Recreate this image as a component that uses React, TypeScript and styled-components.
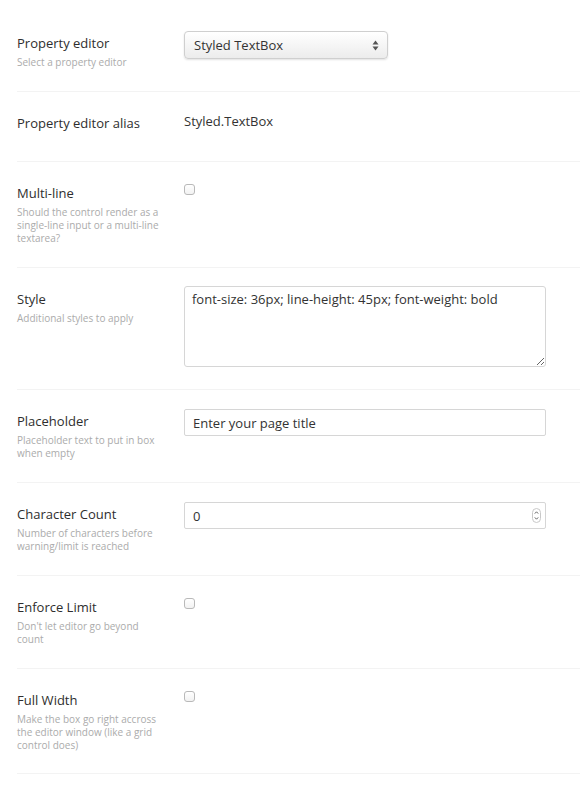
import React from 'react';
import styled, { createGlobalStyle } from 'styled-components';

const GlobalStyle = createGlobalStyle`
  html, body {
    margin: 0;
    padding: 0;
    background: #fff;
  }
  body {
    font-family: 'Open Sans', 'Liberation Sans', sans-serif;
    color: #333;
  }
`;

const Page = styled.div`
  padding: 12px 0 0 17px;
  width: 563px;
`;

const Row = styled.div`
  display: grid;
  grid-template-columns: 167px 1fr;
  padding: 19px 0 22px;
  border-bottom: 1px solid #f3f3f3;
  min-height: 28px;

  &:last-child {
    padding-bottom: 21px;
  }
`;

const LabelCol = styled.div`
  padding-top: 3px;
`;

const Label = styled.div`
  font-size: 13px;
  line-height: 18px;
  color: #2e2e2e;
`;

const Description = styled.div`
  margin-top: 4px;
  font-size: 10px;
  line-height: 13px;
  color: #ababab;
  max-width: 150px;
`;

const Controls = styled.div`
  display: flex;
  align-items: flex-start;
`;

const SelectBox = styled.div`
  position: relative;
  box-sizing: border-box;
  width: 204px;
  height: 28px;
  padding: 0 24px 0 9px;
  border: 1px solid #cfcfcf;
  border-radius: 4px;
  background: linear-gradient(#ffffff, #ececec);
  box-shadow: 0 1px 2px rgba(0, 0, 0, 0.12);
  font-size: 13px;
  line-height: 26px;
  color: #333;
`;

const SelectArrows = styled.svg`
  position: absolute;
  right: 8px;
  top: 8px;
`;

const AliasValue = styled.div`
  font-size: 13px;
  line-height: 18px;
  padding-top: 1px;
`;

const CheckBox = styled.span`
  display: block;
  box-sizing: border-box;
  width: 11px;
  height: 11px;
  margin-top: 3px;
  border: 1px solid #b9b9b9;
  border-radius: 3px;
  background: linear-gradient(#ffffff, #f2f2f2);
`;

const TextArea = styled.textarea`
  box-sizing: border-box;
  width: 362px;
  height: 81px;
  margin: -1px 0 0;
  padding: 3px 7px;
  border: 1px solid #d6d6d6;
  border-radius: 3px;
  font-family: 'Open Sans', 'Liberation Sans', sans-serif;
  font-size: 13px;
  line-height: 18px;
  color: #333;
  outline: none;
`;

const InputWrap = styled.div`
  position: relative;
`;

const TextInput = styled.input`
  display: block;
  box-sizing: border-box;
  width: 362px;
  height: 27px;
  margin: 0;
  padding: 0 8px;
  border: 1px solid #d6d6d6;
  border-radius: 2px;
  font-family: 'Open Sans', 'Liberation Sans', sans-serif;
  font-size: 13px;
  color: #333;
  outline: none;
`;

const Spinner = styled.svg`
  position: absolute;
  right: 5px;
  top: 6px;
`;

type Field = {
  label: string;
  description?: string;
  control: React.ReactNode;
};

const fields: Field[] = [
  {
    label: 'Property editor',
    description: 'Select a property editor',
    control: (
      <SelectBox>
        Styled TextBox
        <SelectArrows width="7" height="11" viewBox="0 0 7 11">
          <path d="M3.5 0.5 L6.5 4.5 H0.5 Z" fill="#555" />
          <path d="M3.5 10.5 L6.5 6.5 H0.5 Z" fill="#555" />
        </SelectArrows>
      </SelectBox>
    ),
  },
  {
    label: 'Property editor alias',
    control: <AliasValue>Styled.TextBox</AliasValue>,
  },
  {
    label: 'Multi-line',
    description: 'Should the control render as a single-line input or a multi-line textarea?',
    control: <CheckBox />,
  },
  {
    label: 'Style',
    description: 'Additional styles to apply',
    control: (
      <TextArea readOnly defaultValue="font-size: 36px; line-height: 45px; font-weight: bold" />
    ),
  },
  {
    label: 'Placeholder',
    description: 'Placeholder text to put in box when empty',
    control: <TextInput readOnly defaultValue="Enter your page title" />,
  },
  {
    label: 'Character Count',
    description: 'Number of characters before warning/limit is reached',
    control: (
      <InputWrap>
        <TextInput readOnly defaultValue="0" />
        <Spinner width="9" height="15" viewBox="0 0 9 15">
          <rect x="0.5" y="0.5" width="8" height="14" rx="4" fill="#fff" stroke="#c8c8c8" />
          <path d="M2.8 5.6 L4.5 3.8 L6.2 5.6" fill="none" stroke="#666" strokeWidth="1" />
          <path d="M2.8 9.4 L4.5 11.2 L6.2 9.4" fill="none" stroke="#666" strokeWidth="1" />
        </Spinner>
      </InputWrap>
    ),
  },
  {
    label: 'Enforce Limit',
    description: "Don't let editor go beyond count",
    control: <CheckBox />,
  },
  {
    label: 'Full Width',
    description: 'Make the box go right accross the editor window (like a grid control does)',
    control: <CheckBox />,
  },
];

export default function App() {
  return (
    <>
      <GlobalStyle />
      <Page>
        {fields.map((f) => (
          <Row key={f.label}>
            <LabelCol>
              <Label>{f.label}</Label>
              {f.description && <Description>{f.description}</Description>}
            </LabelCol>
            <Controls>{f.control}</Controls>
          </Row>
        ))}
      </Page>
    </>
  );
}
